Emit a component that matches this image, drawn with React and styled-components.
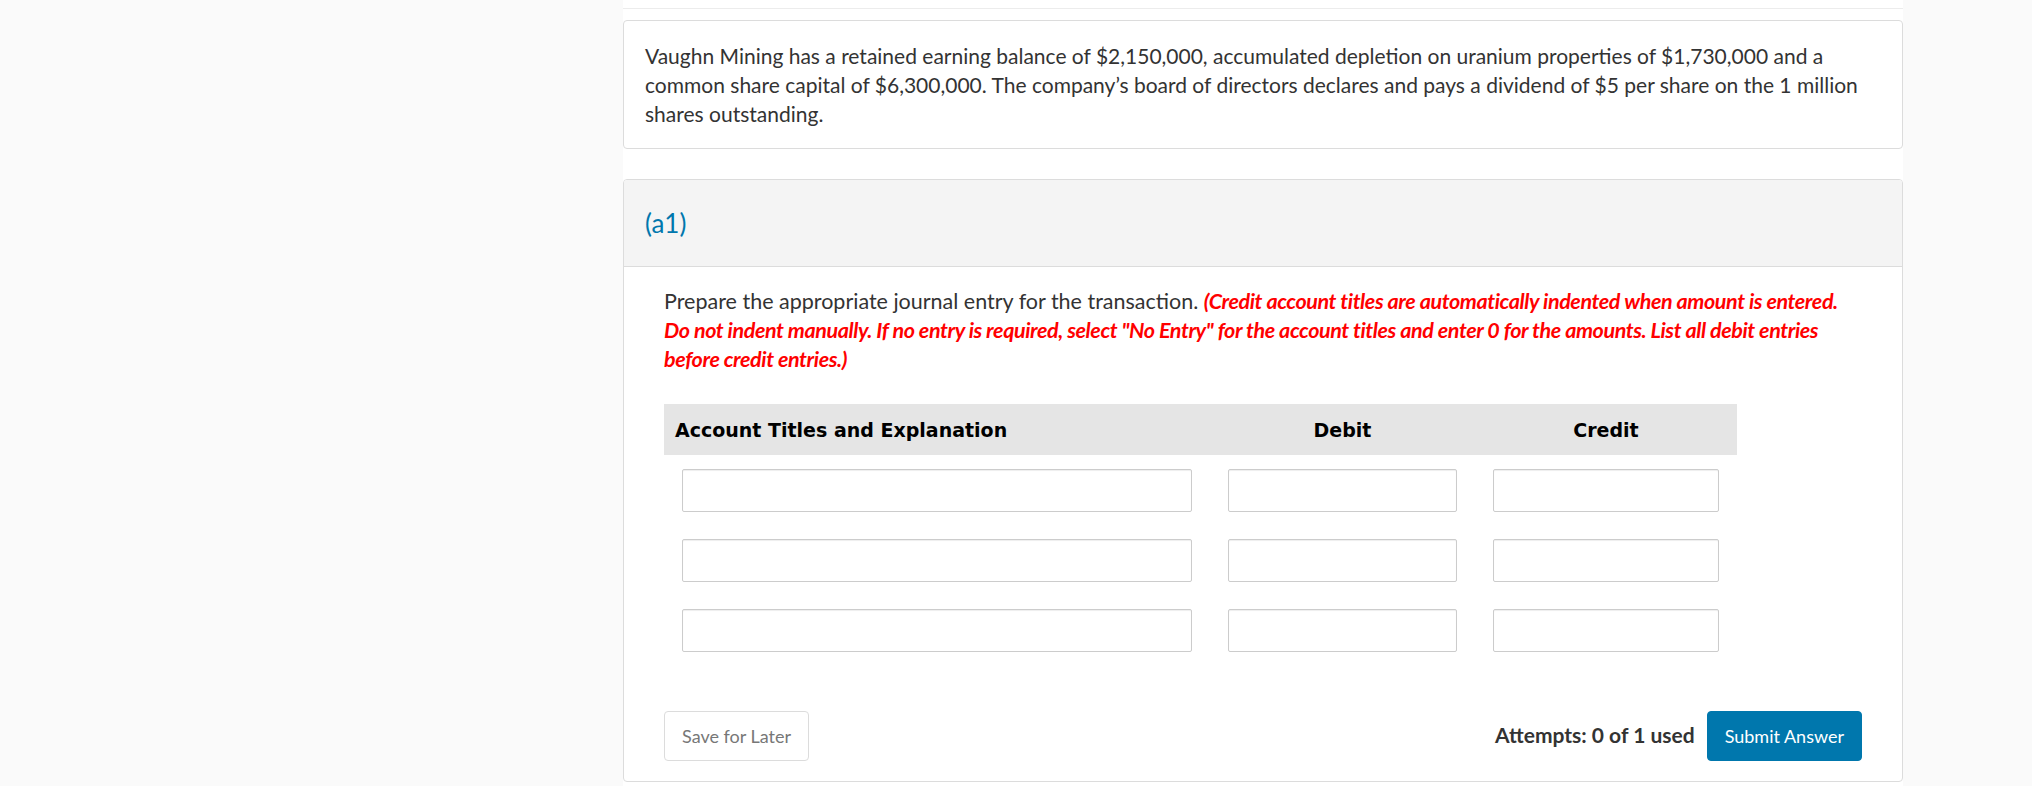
import React from "react";
import styled, { createGlobalStyle } from "styled-components";

const GlobalStyle = createGlobalStyle`
  html, body { margin: 0; padding: 0; background: #fafafa; }
  body { font-family: Lato, "Open Sans", sans-serif; color: #333; }
  * { box-sizing: border-box; }
`;

const Page = styled.div`
  display: grid;
  grid-template-columns: 623px 1280px 1fr;
  min-height: 786px;
`;

const Column = styled.main`
  grid-column: 2;
  background: #fff;
  display: flex;
  flex-direction: column;
`;

const TopRule = styled.div`
  height: 9px;
  border-bottom: 1px solid #ececec;
`;

const Card = styled.section`
  border: 1px solid #dcdcdc;
  border-radius: 4px;
  background: #fff;
  margin-top: ${(p) => p.$gap}px;
  overflow: hidden;
`;

const Paragraph = styled.p`
  margin: 0;
  font-size: ${(p) => p.$size || 21}px;
  line-height: 29px;
  color: #333;
`;

const StemBody = styled.div`
  padding: 20px 21px 20px;
`;

const PartHeader = styled.header`
  background: #f4f4f4;
  border-bottom: 1px solid #dcdcdc;
  padding: 28px 21px;
  font-size: 26px;
  line-height: 30px;
  color: #0077ad;
`;

const PartBody = styled.div`
  padding: 20px 40px 20px;
`;

const Warning = styled.span`
  color: #ff0000;
  font-weight: 700;
  font-style: italic;
  letter-spacing: -0.4px;
`;

const Table = styled.table`
  margin-top: 30px;
  border-collapse: collapse;
`;

const Th = styled.th`
  background: #e5e5e5;
  height: 51px;
  padding: 0 11px;
  font-family: "DejaVu Sans", Verdana, sans-serif;
  font-weight: 700;
  font-size: 19px;
  color: #000;
  text-align: ${(p) => p.$align || "center"};
  width: ${(p) => p.$w}px;
`;

const Td = styled.td`
  padding: 14px 18px 13px;
`;

const Input = styled.input`
  display: block;
  width: 100%;
  height: 43px;
  border: 1px solid #cccccc;
  border-radius: 2px;
  box-shadow: inset 0 1px 1px rgba(0, 0, 0, 0.07);
  background: #fff;
  font: inherit;
  font-size: 18px;
  padding: 0 10px;
`;

const Footer = styled.div`
  margin-top: 46px;
  display: flex;
  align-items: center;
  justify-content: space-between;
`;

const Actions = styled.div`
  display: flex;
  align-items: center;
  gap: 12px;
`;

const Button = styled.button`
  height: 50px;
  padding: 0 17px;
  border-radius: 4px;
  font-family: Lato, sans-serif;
  font-size: 18px;
  cursor: pointer;
  border: 1px solid ${(p) => (p.$primary ? "#0077ad" : "#dcdcdc")};
  background: ${(p) => (p.$primary ? "#0077ad" : "#fff")};
  color: ${(p) => (p.$primary ? "#fff" : "#777")};
`;

const Attempts = styled.span`
  font-size: 21px;
  font-weight: 700;
  color: #333;
  margin-bottom: 4px;
`;

const rows = [0, 1, 2];

export default function App() {
  return (
    <>
      <GlobalStyle />
      <Page>
        <Column>
          <TopRule />
          <Card $gap={11}>
            <StemBody>
              <Paragraph $size={21}>
                Vaughn Mining has a retained earning balance of $2,150,000, accumulated depletion on uranium
                properties of $1,730,000 and a common share capital of $6,300,000. The company’s board of
                directors declares and pays a dividend of $5 per share on the 1 million shares outstanding.
              </Paragraph>
            </StemBody>
          </Card>
          <Card $gap={30}>
            <PartHeader>(a1)</PartHeader>
            <PartBody>
              <Paragraph $size={21.5}>
                Prepare the appropriate journal entry for the transaction.{" "}
                <Warning>
                  (Credit account titles are automatically indented when amount is entered. Do not indent
                  manually. If no entry is required, select "No Entry" for the account titles and enter 0 for
                  the amounts. List all debit entries before credit entries.)
                </Warning>
              </Paragraph>
              <Table>
                <thead>
                  <tr>
                    <Th $w={546} $align="left">Account Titles and Explanation</Th>
                    <Th $w={265}>Debit</Th>
                    <Th $w={262}>Credit</Th>
                  </tr>
                </thead>
                <tbody>
                  {rows.map((r) => (
                    <tr key={r}>
                      <Td><Input type="text" /></Td>
                      <Td><Input type="text" /></Td>
                      <Td><Input type="text" /></Td>
                    </tr>
                  ))}
                </tbody>
              </Table>
              <Footer>
                <Button>Save for Later</Button>
                <Actions>
                  <Attempts>Attempts: 0 of 1 used</Attempts>
                  <Button $primary>Submit Answer</Button>
                </Actions>
              </Footer>
            </PartBody>
          </Card>
        </Column>
      </Page>
    </>
  );
}
